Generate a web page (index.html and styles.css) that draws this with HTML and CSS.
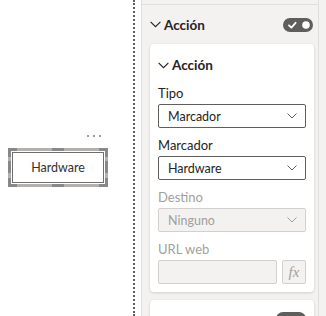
FILE: index.html
```html
<!DOCTYPE html>
<html lang="es">
<head>
<meta charset="utf-8">
<title>Acción</title>
<link rel="stylesheet" href="styles.css">
</head>
<body>
<div class="page">
  <div class="canvas">
    <div class="visual">
      <div class="more"><span></span><span></span><span></span></div>
      <div class="frame">
        <div class="btn">Hardware</div>
        <i class="hd c-tl"></i><i class="hd c-tr"></i><i class="hd c-bl"></i><i class="hd c-br"></i>
        <i class="hd m-t"></i><i class="hd m-b"></i><i class="hd m-l"></i><i class="hd m-r"></i>
      </div>
    </div>
  </div>
  <div class="pane">
    <div class="pane-inner">
      <section class="group">
        <div class="group-head">
          <svg class="chev" width="11" height="7" viewBox="0 0 11 7"><path d="M0.6 0.8 L5.5 5.7 L10.4 0.8" fill="none" stroke="#252423" stroke-width="1.15"/></svg>
          <span class="title">Acción</span>
          <svg class="toggle" width="30" height="14" viewBox="0 0 30 14"><rect x="0" y="0" width="30" height="14" rx="7" fill="#605e5c"/><path d="M6 7.3 L8.4 9.6 L12.6 4.8" fill="none" stroke="#fff" stroke-width="1.8" stroke-linecap="round" stroke-linejoin="round"/><circle cx="23" cy="7" r="3.8" fill="#fff"/></svg>
        </div>
        <div class="card">
          <div class="card-head">
            <svg class="chev" width="11" height="7" viewBox="0 0 11 7"><path d="M0.6 0.8 L5.5 5.7 L10.4 0.8" fill="none" stroke="#252423" stroke-width="1.15"/></svg>
            <span class="title">Acción</span>
          </div>
          <div class="field">
            <div class="label">Tipo</div>
            <div class="select"><span>Marcador</span><svg width="10" height="6" viewBox="0 0 10 6"><path d="M0.5 0.5 L5 5 L9.5 0.5" fill="none" stroke="#605e5c" stroke-width="1"/></svg></div>
          </div>
          <div class="field">
            <div class="label">Marcador</div>
            <div class="select"><span>Hardware</span><svg width="10" height="6" viewBox="0 0 10 6"><path d="M0.5 0.5 L5 5 L9.5 0.5" fill="none" stroke="#605e5c" stroke-width="1"/></svg></div>
          </div>
          <div class="field">
            <div class="label off">Destino</div>
            <div class="select disabled"><span>Ninguno</span><svg width="10" height="6" viewBox="0 0 10 6"><path d="M0.5 0.5 L5 5 L9.5 0.5" fill="none" stroke="#a19f9d" stroke-width="1"/></svg></div>
          </div>
          <div class="field last">
            <div class="label off">URL web</div>
            <div class="input-row">
              <div class="input"></div>
              <div class="fx">fx</div>
            </div>
          </div>
        </div>
        <div class="card card-next">
          <div class="card-head next-head">
            <svg class="chev" width="11" height="7" viewBox="0 0 11 7"><path d="M0.6 0.8 L5.5 5.7 L10.4 0.8" fill="none" stroke="#252423" stroke-width="1.15"/></svg>
            <svg class="toggle" width="30" height="14" viewBox="0 0 30 14"><rect x="0" y="0" width="30" height="14" rx="7" fill="#605e5c"/></svg>
          </div>
        </div>
      </section>
    </div>
  </div>
</div>
</body>
</html>
```

FILE: styles.css
```css
html, body {
  margin: 0;
  padding: 0;
  background: #ffffff;
}
body {
  font-family: Lato, "Noto Sans", sans-serif;
  color: #252423;
}
.page {
  display: flex;
  width: 326px;
  height: 316px;
  overflow: hidden;
}
.canvas {
  width: 133px;
  flex: none;
  border-right: 2px dotted #605e5c;
  background: #ffffff;
}
.visual {
  margin-top: 132px;
  margin-left: 8px;
  width: 100px;
}
.more {
  height: 8px;
  display: flex;
  align-items: center;
  justify-content: flex-end;
  gap: 4px;
  padding-right: 7px;
  margin-bottom: 8px;
}
.more span {
  width: 2px;
  height: 2px;
  background: #a19f9d;
}
.frame {
  position: relative;
  box-sizing: border-box;
  width: 100px;
  height: 39px;
  border: 3px solid #b3b0ad;
  padding: 1px;
}
.btn {
  box-sizing: border-box;
  height: 100%;
  border: 1px solid #6e6e6e;
  background: #fff;
  display: flex;
  align-items: center;
  justify-content: center;
  font-size: 12.5px;
  color: #323130;
}
.hd {
  position: absolute;
  background: #8a8886;
}
.c-tl { left: -3px; top: -3px; width: 9px; height: 3px; }
.c-tr { right: -3px; top: -3px; width: 9px; height: 3px; }
.c-bl { left: -3px; bottom: -3px; width: 9px; height: 3px; }
.c-br { right: -3px; bottom: -3px; width: 9px; height: 3px; }
.c-tl::after, .c-tr::after, .c-bl::after, .c-br::after {
  content: "";
  position: absolute;
  width: 3px;
  height: 9px;
  background: #8a8886;
}
.c-tl::after { left: 0; top: 0; }
.c-tr::after { right: 0; top: 0; }
.c-bl::after { left: 0; bottom: 0; }
.c-br::after { right: 0; bottom: 0; }
.m-t { top: -3px; left: 41px; width: 12px; height: 3px; }
.m-b { bottom: -3px; left: 41px; width: 12px; height: 3px; }
.m-l { left: -3px; top: 10px; width: 3px; height: 12px; }
.m-r { right: -3px; top: 10px; width: 3px; height: 12px; }

.pane {
  flex: 1;
  margin-left: 6px;
  background: #f3f2f1;
}
.pane-inner {
  box-sizing: border-box;
  width: 178px;
  height: 100%;
  border-left: 1px solid #e1dfdd;
  border-right: 1px solid #e1dfdd;
  padding-top: 4px;
}
.group {
  border-top: 1px solid #e1dfdd;
}
.group-head {
  height: 39px;
  display: flex;
  align-items: center;
  padding: 0 5px 0 8px;
}
.chev {
  flex: none;
  margin-right: 3px;
}
.title {
  font-weight: 700;
  font-size: 13.5px;
  color: #252423;
}
.toggle {
  margin-left: auto;
  flex: none;
}
.card {
  margin: 0 4px 0 8px;
  background: #ffffff;
  border-radius: 4px;
  box-shadow: 0 1px 3px rgba(0, 0, 0, 0.14), 0 0 1px rgba(0, 0, 0, 0.08);
  padding: 8px;
}
.card-head {
  height: 26px;
  display: flex;
  align-items: center;
  margin-bottom: 5px;
}
.field {
  margin-bottom: 7px;
}
.field.last {
  margin-bottom: 0;
}
.label {
  font-size: 13px;
  line-height: 20px;
  color: #252423;
  margin-bottom: 1px;
}
.label.off {
  color: #a19f9d;
}
.select {
  box-sizing: border-box;
  height: 24px;
  border: 1px solid #605e5c;
  border-radius: 2px;
  background: #fff;
  display: flex;
  align-items: center;
  justify-content: space-between;
  padding: 0 8px 0 9px;
  font-size: 12.5px;
  color: #252423;
}
.select.disabled {
  background: #f3f2f1;
  border-color: #d2d0ce;
  color: #a19f9d;
}
.input-row {
  display: flex;
  gap: 5px;
}
.input {
  flex: 1;
  box-sizing: border-box;
  height: 24px;
  border: 1px solid #d2d0ce;
  border-radius: 2px;
  background: #f3f2f1;
}
.fx {
  box-sizing: border-box;
  width: 24px;
  height: 24px;
  border: 1px solid #d2d0ce;
  border-radius: 2px;
  background: #f3f2f1;
  display: flex;
  align-items: center;
  justify-content: center;
  font-family: "Liberation Serif", serif;
  font-style: italic;
  font-size: 15px;
  color: #a19f9d;
}
.card-next {
  margin-top: 8px;
  padding-top: 0;
}
.next-head {
  height: 38px;
  padding-left: 2px;
}
```
